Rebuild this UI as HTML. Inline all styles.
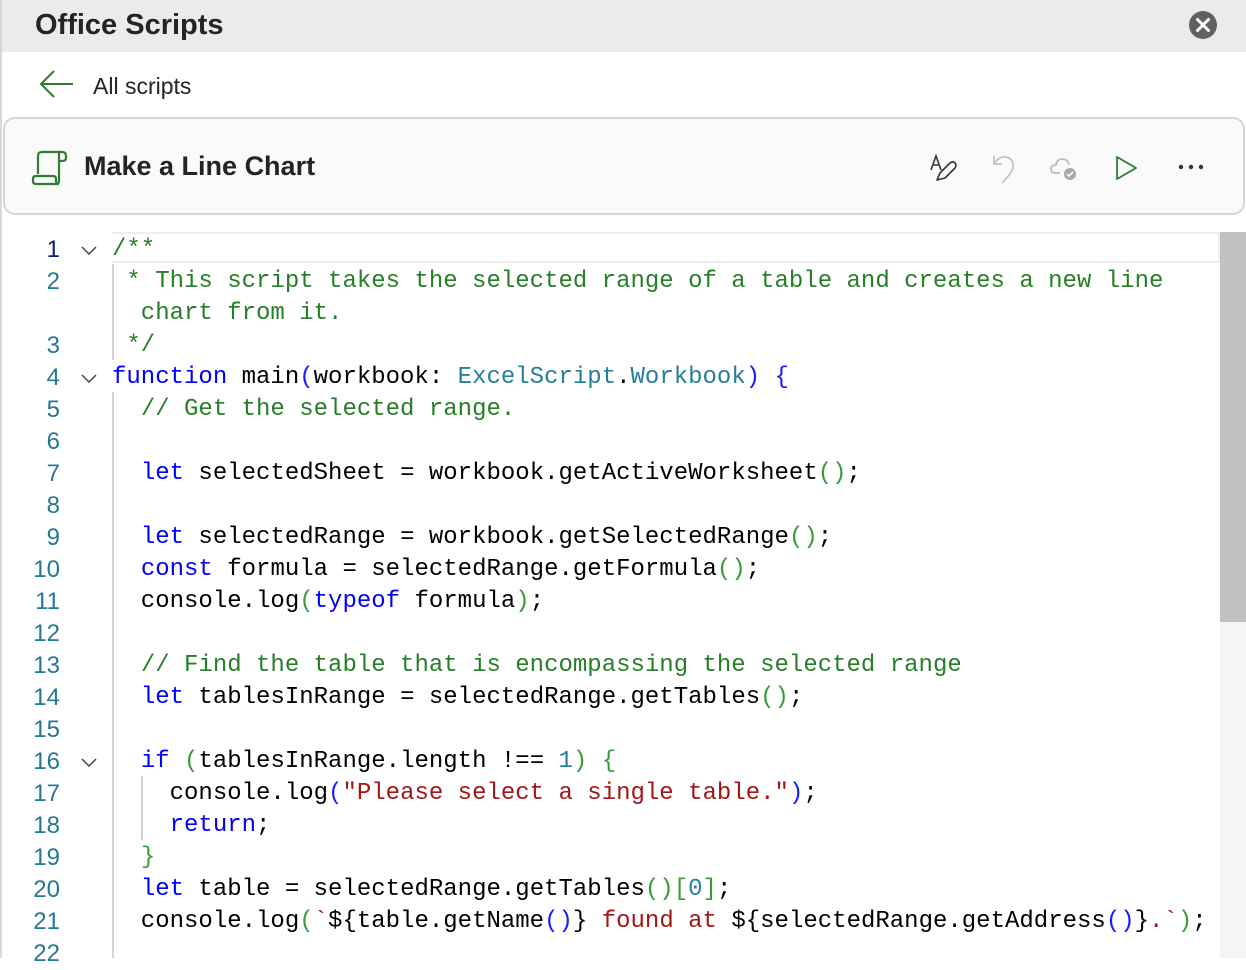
<!DOCTYPE html>
<html><head><meta charset="utf-8"><style>
*{margin:0;padding:0;box-sizing:border-box}
body{width:1246px;height:958px;overflow:hidden;background:#fff;font-family:"Liberation Sans",sans-serif;position:relative}
.top{position:absolute;left:0;top:0;width:1246px;height:52px;background:#ebebeb;border-left:2px solid #d4d4d4}
.title{position:absolute;left:33px;top:9px;font-size:29px;font-weight:bold;color:#242424;letter-spacing:0px}
.lb{position:absolute;left:0;top:52px;width:2px;height:906px;background:#d8d8d8}
.card{position:absolute;left:3px;top:117px;width:1242px;height:98px;border:2px solid #d6d6d6;border-radius:12px;background:#fafafa}
.code{position:absolute;left:0;top:2px;font-family:"Liberation Mono",monospace;font-size:24px}
.r{position:absolute;left:112px;height:32px;line-height:32px;white-space:pre;color:#000}
.n{position:absolute;width:60px;text-align:right;left:0;height:32px;line-height:32px;color:#237893;font-family:"Liberation Sans",sans-serif;font-size:24px}
.c{color:#267f26}.k{color:#0000ff}.t{color:#267f99}.s{color:#a31515}.g{color:#3b9b3b}.b{color:#1a1aff}
.fold{position:absolute;left:80px;width:18px;height:18px}
.guide{position:absolute;width:2px;background:#d3d3d3}
</style></head><body>
<div class="top"><div class="title">Office Scripts</div>
<svg style="position:absolute;left:1186px;top:11px" width="30" height="30" viewBox="0 0 30 30"><circle cx="15" cy="14" r="14" fill="#616161"/><path d="M9.5 8.5l11 11M20.5 8.5l-11 11" stroke="#fff" stroke-width="3" stroke-linecap="round"/></svg>
</div>
<div class="lb"></div>
<svg style="position:absolute;left:38px;top:68px" width="38" height="32" viewBox="0 0 38 32"><path d="M35 16H4M16 3L3 16l13 13" fill="none" stroke="#2e7d32" stroke-width="2"/></svg>
<div style="position:absolute;left:93px;top:73px;font-size:23px;color:#242424">All scripts</div>
<div class="card">
<svg style="position:absolute;left:25px;top:29px" width="40" height="40" viewBox="0 0 40 40"><path d="M8 26V8q0-4 4-4h20q4 0 4 4v2q0 3-4 3h-3M29 4v29q0 3-3 3H6q-3 0-3-3v-2q0-3 3-3h17q3 0 3 3v2q0 3 3 3" fill="none" stroke="#2e7d32" stroke-width="2.2" stroke-linejoin="round"/></svg>
<div style="position:absolute;left:79px;top:32px;font-size:27px;font-weight:bold;color:#242424">Make a Line Chart</div>
<svg style="position:absolute;left:922px;top:33px" width="32" height="32" viewBox="0 0 32 32"><path d="M4 18L9 4l5 14M6 13h6" fill="none" stroke="#333" stroke-width="1.6"/><path d="M10 28l3-7 10-10q3-2 5 0 2 2 0 5L18 26z" fill="none" stroke="#333" stroke-width="1.6" stroke-linejoin="round"/></svg>
<svg style="position:absolute;left:984px;top:33px" width="32" height="32" viewBox="0 0 32 32"><path d="M5 4v8h8M5 12q5-8 12-7 8 2 7 10-1 6-11 16" fill="none" stroke="#c4c4c4" stroke-width="1.8"/></svg>
<svg style="position:absolute;left:1044px;top:33px" width="32" height="32" viewBox="0 0 32 32"><path d="M20 13q-1-6-7-6-5 0-6 6-5 0-5 4 0 4 5 4h4" fill="none" stroke="#bdbdbd" stroke-width="1.8"/><circle cx="21" cy="22" r="6" fill="#a8a8a8"/><path d="M18 22l2 2 4-4" fill="none" stroke="#fff" stroke-width="1.6"/></svg>
<svg style="position:absolute;left:1106px;top:33px" width="32" height="32" viewBox="0 0 32 32"><path d="M6 5v22l19-11z" fill="none" stroke="#2e7d32" stroke-width="1.8" stroke-linejoin="round"/></svg>
<svg style="position:absolute;left:1170px;top:40px" width="32" height="16" viewBox="0 0 32 16"><circle cx="6" cy="8" r="2.2" fill="#333"/><circle cx="16" cy="8" r="2.2" fill="#333"/><circle cx="26" cy="8" r="2.2" fill="#333"/></svg>
</div>
<div style="position:absolute;left:112px;top:232px;width:1108px;height:31px;border:2px solid #eeeeee;border-left:none"></div>
<div style="position:absolute;left:1220px;top:232px;width:26px;height:726px;background:#f5f5f5"></div>
<div style="position:absolute;left:1220px;top:232px;width:26px;height:390px;background:#c1c1c1"></div>
<div class="guide" style="left:112px;top:264px;height:96px"></div>
<div class="guide" style="left:112px;top:392px;height:566px"></div>
<div class="guide" style="left:141px;top:776px;height:64px"></div>
<div class="code">
<svg class="fold" style="top:239px" viewBox="0 0 18 18"><path d="M2 6l7 7 7-7" fill="none" stroke="#444" stroke-width="1.5"/></svg>
<svg class="fold" style="top:367px" viewBox="0 0 18 18"><path d="M2 6l7 7 7-7" fill="none" stroke="#444" stroke-width="1.5"/></svg>
<svg class="fold" style="top:751px" viewBox="0 0 18 18"><path d="M2 6l7 7 7-7" fill="none" stroke="#444" stroke-width="1.5"/></svg>
<div class="n" style="top:232px;color:#0b216f">1</div>
<div class="n" style="top:264px">2</div>
<div class="n" style="top:328px">3</div>
<div class="n" style="top:360px">4</div>
<div class="n" style="top:392px">5</div>
<div class="n" style="top:424px">6</div>
<div class="n" style="top:456px">7</div>
<div class="n" style="top:488px">8</div>
<div class="n" style="top:520px">9</div>
<div class="n" style="top:552px">10</div>
<div class="n" style="top:584px">11</div>
<div class="n" style="top:616px">12</div>
<div class="n" style="top:648px">13</div>
<div class="n" style="top:680px">14</div>
<div class="n" style="top:712px">15</div>
<div class="n" style="top:744px">16</div>
<div class="n" style="top:776px">17</div>
<div class="n" style="top:808px">18</div>
<div class="n" style="top:840px">19</div>
<div class="n" style="top:872px">20</div>
<div class="n" style="top:904px">21</div>
<div class="n" style="top:936px">22</div>
<div class="r c" style="top:232px">/**</div>
<div class="r c" style="top:264px"> * This script takes the selected range of a table and creates a new line</div>
<div class="r c" style="top:296px">  chart from it.</div>
<div class="r c" style="top:328px"> */</div>
<div class="r" style="top:360px"><span class="k">function</span> main<span class="b">(</span>workbook: <span class="t">ExcelScript</span>.<span class="t">Workbook</span><span class="b">)</span> <span class="b">{</span></div>
<div class="r" style="top:392px">  <span class="c">// Get the selected range.</span></div>
<div class="r" style="top:456px">  <span class="k">let</span> selectedSheet = workbook.getActiveWorksheet<span class="g">()</span>;</div>
<div class="r" style="top:520px">  <span class="k">let</span> selectedRange = workbook.getSelectedRange<span class="g">()</span>;</div>
<div class="r" style="top:552px">  <span class="k">const</span> formula = selectedRange.getFormula<span class="g">()</span>;</div>
<div class="r" style="top:584px">  console.log<span class="g">(</span><span class="k">typeof</span> formula<span class="g">)</span>;</div>
<div class="r" style="top:648px">  <span class="c">// Find the table that is encompassing the selected range</span></div>
<div class="r" style="top:680px">  <span class="k">let</span> tablesInRange = selectedRange.getTables<span class="g">()</span>;</div>
<div class="r" style="top:744px">  <span class="k">if</span> <span class="g">(</span>tablesInRange.length !== <span class="t">1</span><span class="g">)</span> <span class="g">{</span></div>
<div class="r" style="top:776px">    console.log<span class="b">(</span><span class="s">"Please select a single table."</span><span class="b">)</span>;</div>
<div class="r" style="top:808px">    <span class="k">return</span>;</div>
<div class="r" style="top:840px">  <span class="g">}</span></div>
<div class="r" style="top:872px">  <span class="k">let</span> table = selectedRange.getTables<span class="g">()</span><span class="g">[</span><span class="t">0</span><span class="g">]</span>;</div>
<div class="r" style="top:904px">  console.log<span class="g">(</span><span class="s">`</span>${table.getName<span class="b">()</span>}<span class="s"> found at </span>${selectedRange.getAddress<span class="b">()</span>}<span class="s">.`</span><span class="g">)</span>;</div>
</div>
</body></html>
